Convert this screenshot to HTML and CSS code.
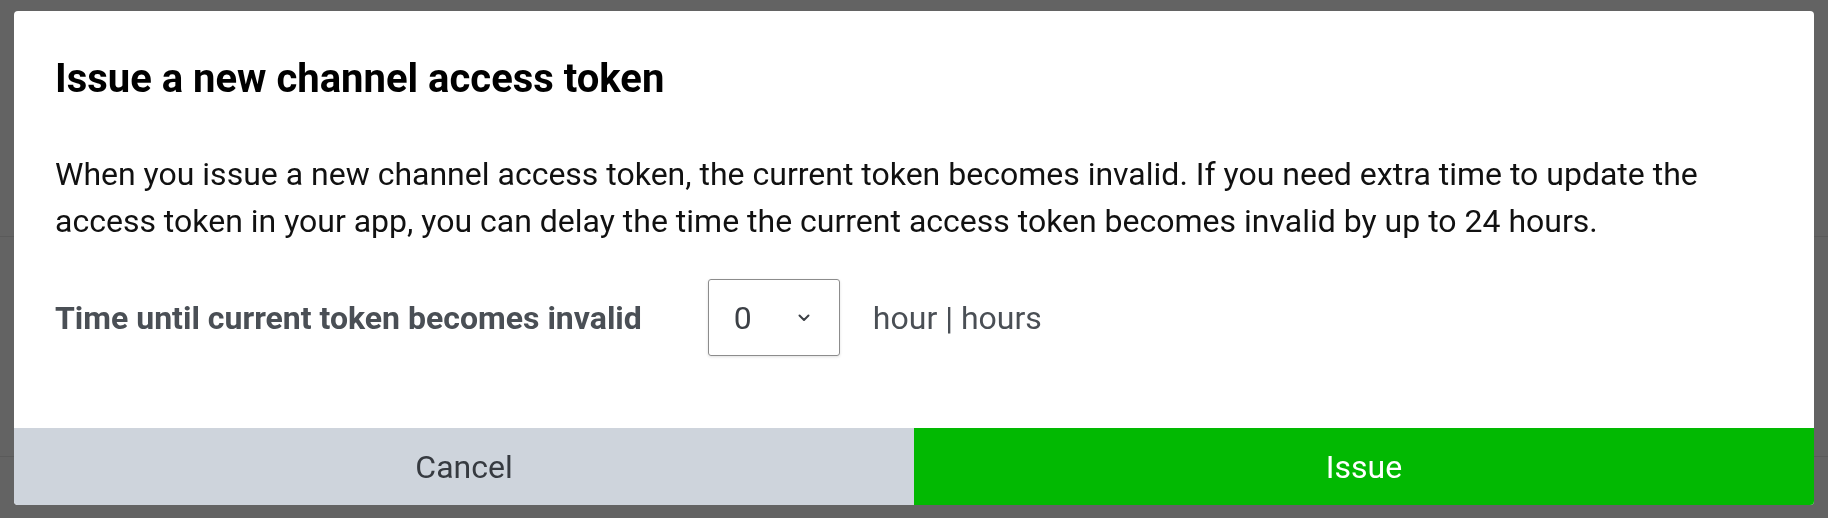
FILE: index.html
```html
<!DOCTYPE html>
<html lang="en">
<head>
  <meta charset="UTF-8" />
  <title>Issue a new channel access token</title>
  <link rel="stylesheet" href="styles.css">
</head>
<body>

  <div class="page">
    <div class="page-row first"></div>
    <div class="page-row"></div>
  </div>

  <div class="overlay">
    <div class="modal">
      <div class="modal-body">
        <h1>Issue a new channel access token</h1>
        <p class="desc">When you issue a new channel access token, the current token becomes invalid. If you need extra time to update the access token in your app, you can delay the time the current access token becomes invalid by up to 24 hours.</p>

        <div class="field">
          <label for="hours">Time until current token becomes invalid</label>
          <div class="select">
            <span class="select-value">0</span>
            <svg class="chevron" width="12" height="8" viewBox="0 0 12 8">
              <polyline points="1.5,1.5 6,6 10.5,1.5" fill="none" stroke="#3c4046" stroke-width="2" stroke-linecap="round" stroke-linejoin="round" />
            </svg>
          </div>
          <span class="unit">hour | hours</span>
        </div>
      </div>

      <div class="modal-footer">
        <button class="btn cancel">Cancel</button>
        <button class="btn issue">Issue</button>
      </div>
    </div>
  </div>

</body>
</html>
```

FILE: styles.css
```css
* {
  box-sizing: border-box;
}

body {
  margin: 0;
  font-family: Roboto, 'Noto Sans', sans-serif;
  background: #636363;
  height: 518px;
  overflow: hidden;
}

.page-row {
  height: 220px;
  border-bottom: 1px solid #5a5a5a;
}

.page-row.first {
  height: 237px;
}

.overlay {
  position: fixed;
  top: 0;
  left: 0;
  right: 0;
  bottom: 0;
  padding: 11px 14px 13px;
  display: flex;
}

.modal {
  flex: 1;
  background: #fff;
  border-radius: 4px;
  overflow: hidden;
  display: flex;
  flex-direction: column;
}

.modal-body {
  flex: 1;
  padding: 44px 80px 0 41px;
}

h1 {
  margin: 0 0 48px;
  font-size: 40px;
  line-height: 48px;
  font-weight: 700;
  color: #000;
}

.desc {
  margin: 0 0 34px;
  font-size: 32px;
  line-height: 47px;
  color: #111;
}

.field {
  display: flex;
  align-items: center;
}

.field label {
  font-size: 32px;
  line-height: 48px;
  font-weight: 700;
  color: #4a4f55;
  margin-right: 66px;
}

.select {
  width: 132px;
  height: 77px;
  border: 1px solid #8c8c8c;
  border-radius: 3px;
  box-shadow: 0 1px 3px rgba(0,0,0,0.12);
  display: flex;
  align-items: center;
  padding: 0 29px 0 25px;
  justify-content: space-between;
}

.select-value {
  font-size: 32px;
  color: #3c4046;
}

.unit {
  margin-left: 33px;
  font-size: 32px;
  color: #4a4f55;
}

.modal-footer {
  display: flex;
  height: 77px;
}

.btn {
  flex: 1;
  border: none;
  font-family: inherit;
  font-size: 32px;
  cursor: pointer;
}

.cancel {
  background: #ced4dc;
  color: #363a40;
}

.issue {
  background: #02b902;
  color: #fff;
}
```
